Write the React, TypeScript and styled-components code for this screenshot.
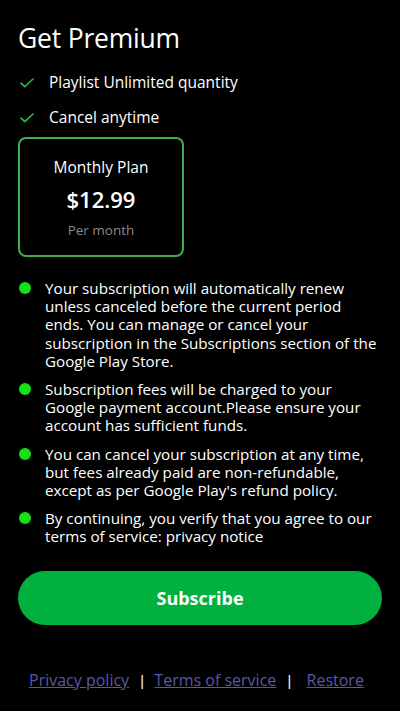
import React from "react"
import styled, { createGlobalStyle } from "styled-components"

const GlobalStyle = createGlobalStyle`
  html, body {
    margin: 0;
    padding: 0;
    background: #000;
  }
  body {
    font-family: "Open Sans", "Noto Sans", sans-serif;
    color: #fff;
  }
`

const Page = styled.div`
  width: 400px;
  min-height: 711px;
  box-sizing: border-box;
  padding: 20px 18px 0 18px;
  background: #000;
  display: flex;
  flex-direction: column;
`

const Title = styled.h1`
  margin: 0 0 14px 0;
  font-size: 26.5px;
  font-weight: 400;
  line-height: 36px;
  letter-spacing: -0.2px;
`

const FeatureList = styled.ul`
  list-style: none;
  margin: 0;
  padding: 0;
  display: flex;
  flex-direction: column;
  gap: 10px;
`

const Feature = styled.li`
  display: flex;
  align-items: center;
  gap: 15px;
  font-size: 15.5px;
  line-height: 25px;
  padding-left: 2px;
`

const PlanCard = styled.div`
  margin-top: 7px;
  width: 166px;
  height: 120px;
  box-sizing: border-box;
  border: 2px solid #3fae4a;
  border-radius: 8px;
  display: flex;
  flex-direction: column;
  align-items: center;
  padding-top: 16px;
`

const PlanName = styled.div`
  font-size: 15.5px;
  line-height: 24px;
`

const PlanPrice = styled.div`
  margin-top: 6px;
  font-size: 22px;
  font-weight: 600;
  line-height: 28px;
`

const PlanPeriod = styled.div`
  margin-top: 7px;
  font-size: 13.5px;
  line-height: 20px;
  color: #8a8a8a;
`

const Notes = styled.ul`
  list-style: none;
  margin: 22px 0 0 0;
  padding: 0;
  display: flex;
  flex-direction: column;
  gap: 10px;
`

const Note = styled.li`
  display: flex;
  align-items: flex-start;
  gap: 14px;
  font-size: 15.2px;
  line-height: 18.2px;
`

const Dot = styled.span`
  flex: none;
  width: 12px;
  height: 12px;
  border-radius: 50%;
  background: #16e016;
  margin: 3px 0 0 1px;
`

const SubscribeButton = styled.button`
  margin-top: 25px;
  width: 364px;
  height: 54px;
  border: 0;
  border-radius: 27px;
  background: #00b140;
  color: #fff;
  font-family: "Open Sans", "Noto Sans", sans-serif;
  font-size: 18px;
  font-weight: 700;
  cursor: pointer;
`

const Footer = styled.div`
  margin-top: 44px;
  padding-left: 11px;
  display: flex;
  align-items: center;
  font-size: 16px;
`

const FooterLink = styled.a<{ $gap?: number }>`
  color: #5858a8;
  text-decoration: underline;
  margin-left: ${(p) => p.$gap ?? 0}px;
`

const Sep = styled.span`
  color: #e8e8e8;
  margin-left: 9px;
  font-size: 15px;
  font-weight: 600;
`

const Check = () => (
  <svg width="14" height="10" viewBox="0 0 14 10" fill="none">
    <path d="M1 5.2L4.8 8.6L13 1" stroke="#22c33a" strokeWidth="1.6" strokeLinecap="round" strokeLinejoin="round" />
  </svg>
)

const notes = [
  "Your subscription will automatically renew unless canceled before the current period ends. You can manage or cancel your subscription in the Subscriptions section of the Google Play Store.",
  "Subscription fees will be charged to your Google payment account.Please ensure your account has sufficient funds.",
  "You can cancel your subscription at any time, but fees already paid are non-refundable, except as per Google Play's refund policy.",
  "By continuing, you verify that you agree to our terms of service: privacy notice",
]

export default function App() {
  return (
    <>
      <GlobalStyle />
      <Page>
        <Title>Get Premium</Title>
        <FeatureList>
          <Feature>
            <Check />
            Playlist Unlimited quantity
          </Feature>
          <Feature>
            <Check />
            Cancel anytime
          </Feature>
        </FeatureList>
        <PlanCard>
          <PlanName>Monthly Plan</PlanName>
          <PlanPrice>$12.99</PlanPrice>
          <PlanPeriod>Per month</PlanPeriod>
        </PlanCard>
        <Notes>
          {notes.map((n) => (
            <Note key={n}>
              <Dot />
              <span>{n}</span>
            </Note>
          ))}
        </Notes>
        <SubscribeButton>Subscribe</SubscribeButton>
        <Footer>
          <FooterLink href="#">Privacy policy</FooterLink>
          <Sep>|</Sep>
          <FooterLink href="#" $gap={8}>Terms of service</FooterLink>
          <Sep>|</Sep>
          <FooterLink href="#" $gap={13}>Restore</FooterLink>
        </Footer>
      </Page>
    </>
  )
}
